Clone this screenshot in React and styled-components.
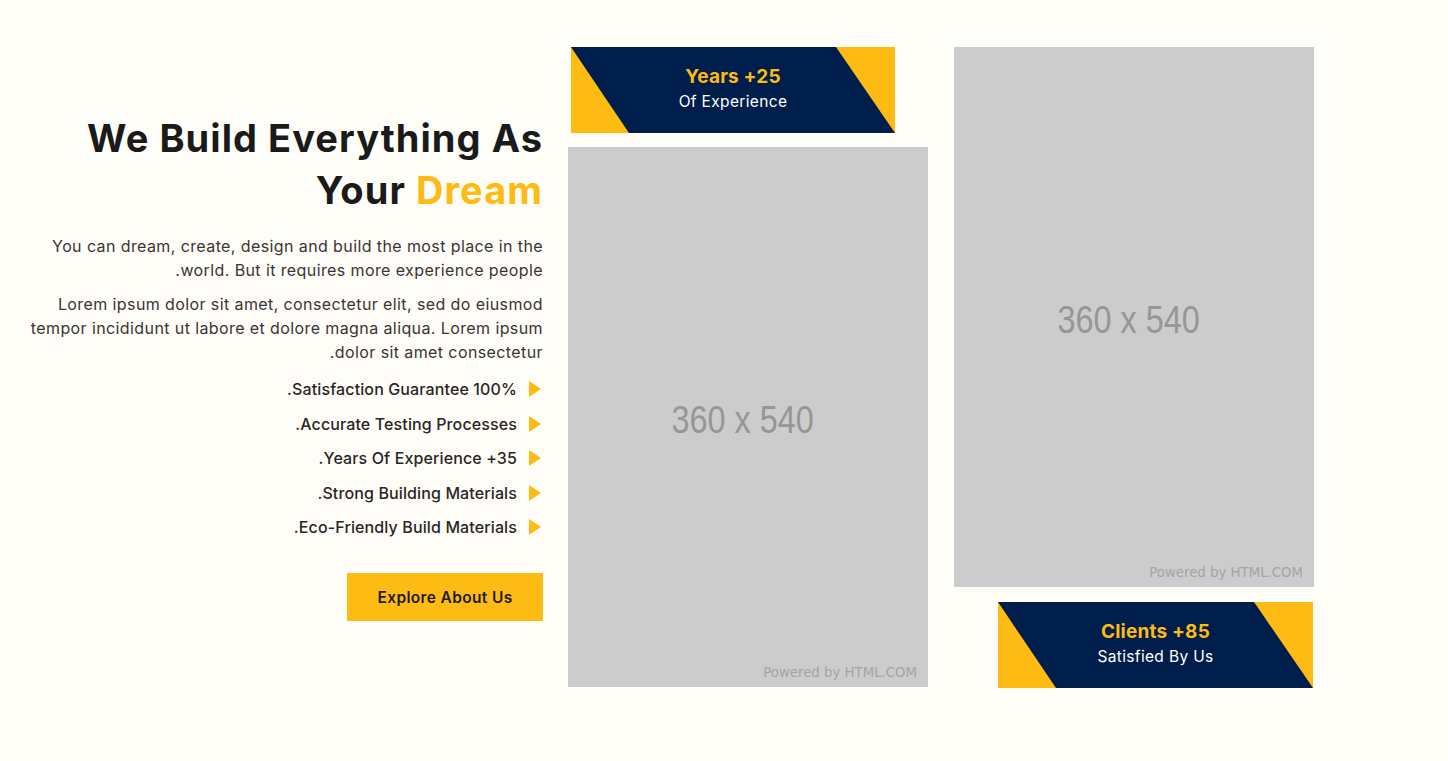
import React from "react";
import styled, { createGlobalStyle } from "styled-components";

const GlobalStyle = createGlobalStyle`
  html, body { margin: 0; padding: 0; background: #fffdf7; }
  body { font-family: Inter, "Open Sans", sans-serif; color: #2e2a2a; }
  * { box-sizing: border-box; }
`;

const YELLOW = "#fdbb14";
const NAVY = "#001e4b";

const Page = styled.main`
  display: flex;
  align-items: center;
  padding: 47px 0 73px 20px;
  min-height: 761px;
`;

const Intro = styled.section`
  direction: rtl;
  width: 523px;
  display: flex;
  flex-direction: column;
  align-items: flex-start;
  text-align: start;
  padding-bottom: 2px;
`;

const Title = styled.h1`
  margin: 0 0 18px;
  font-size: 38px;
  line-height: 52px;
  font-weight: 700;
  letter-spacing: 1.05px;
  color: #1b1a1a;
`;

const Accent = styled.span`
  color: ${YELLOW};
`;

const Para = styled.p`
  margin: 0 0 10px;
  font-size: 16px;
  line-height: 24px;
  letter-spacing: 0.4px;
  color: #3a3434;
`;

const List = styled.ul`
  list-style: none;
  margin: 3px 0 0;
  padding: 0;
  display: flex;
  flex-direction: column;
  gap: 10.5px;
`;

const Item = styled.li`
  display: flex;
  align-items: center;
  gap: 12px;
  font-size: 16px;
  line-height: 24px;
  font-weight: 500;
  letter-spacing: 0.12px;
  color: #2a2626;
  padding-right: 2px;
`;

const Arrow = styled.svg`
  width: 12px;
  height: 16px;
  flex: none;
`;

const Button = styled.button`
  margin-top: 34px;
  width: 196px;
  height: 48px;
  border: 0;
  background: ${YELLOW};
  color: #1f1c1c;
  font-family: Inter, sans-serif;
  font-size: 15.5px;
  font-weight: 600;
  letter-spacing: 0.35px;
  cursor: pointer;
`;

const Column = styled.div`
  width: 360px;
  flex: none;
  align-self: flex-start;
  display: flex;
  flex-direction: column;
  margin-left: ${p => p.$gap}px;
`;

const Badge = styled.div`
  position: relative;
  width: ${p => p.$w}px;
  height: 86px;
  padding-bottom: 2px;
  background: ${YELLOW};
  align-self: ${p => (p.$end ? "flex-end" : "flex-start")};
  margin: ${p => p.$m};
  display: flex;
  flex-direction: column;
  align-items: center;
  justify-content: center;
  isolation: isolate;
  &::before {
    content: "";
    position: absolute;
    inset: 0;
    background: ${NAVY};
    clip-path: polygon(0 0, calc(100% - 59px) 0, 100% 100%, 58px 100%);
    z-index: -1;
  }
`;

const BadgeTitle = styled.div`
  margin-bottom: 2px;
  font-size: 19px;
  line-height: 24px;
  font-weight: 700;
  color: ${YELLOW};
  letter-spacing: 0.2px;
`;

const BadgeSub = styled.div`
  font-size: 15.5px;
  line-height: 22px;
  color: #ffffff;
  letter-spacing: 0.35px;
`;

const Placeholder = styled.div`
  position: relative;
  width: 360px;
  height: 540px;
  background: #cccccc;
  display: flex;
  align-items: center;
  justify-content: center;
`;

const Size = styled.span`
  font-family: "Liberation Sans", Arial, sans-serif;
  font-size: 39px;
  color: #969696;
  transform: translate(-5px, 3px) scaleX(0.83);
`;

const Powered = styled.span`
  position: absolute;
  right: 11px;
  bottom: 7px;
  font-family: "DejaVu Sans", Verdana, sans-serif;
  font-size: 13.3px;
  color: #a4a4a4;
`;

const features = [
  "Satisfaction Guarantee 100%.",
  "Accurate Testing Processes.",
  "Years Of Experience +35.",
  "Strong Building Materials.",
  "Eco-Friendly Build Materials.",
];

function Image() {
  return (
    <Placeholder>
      <Size>360 x 540</Size>
      <Powered>Powered by HTML.COM</Powered>
    </Placeholder>
  );
}

export default function App() {
  return (
    <>
      <GlobalStyle />
      <Page>
        <Intro>
          <Title>
            We Build Everything As Your <Accent>Dream</Accent>
          </Title>
          <Para>
            You can dream, create, design and build the most place in the world. But it requires more experience people.
          </Para>
          <Para>
            Lorem ipsum dolor sit amet, consectetur elit, sed do eiusmod tempor incididunt ut labore et dolore magna aliqua. Lorem ipsum dolor sit amet consectetur.
          </Para>
          <List>
            {features.map(f => (
              <Item key={f}>
                <Arrow viewBox="0 0 12 16">
                  <polygon points="0,0 12,8 0,16" fill={YELLOW} />
                </Arrow>
                <span>{f}</span>
              </Item>
            ))}
          </List>
          <Button>Explore About Us</Button>
        </Intro>
        <Column $gap={25}>
          <Badge $w={324} $m="0 0 14px 3px">
            <BadgeTitle>Years +25</BadgeTitle>
            <BadgeSub>Of Experience</BadgeSub>
          </Badge>
          <Image />
        </Column>
        <Column $gap={26}>
          <Image />
          <Badge $w={315} $end $m="15px 1px 0 0">
            <BadgeTitle>Clients +85</BadgeTitle>
            <BadgeSub>Satisfied By Us</BadgeSub>
          </Badge>
        </Column>
      </Page>
    </>
  );
}
